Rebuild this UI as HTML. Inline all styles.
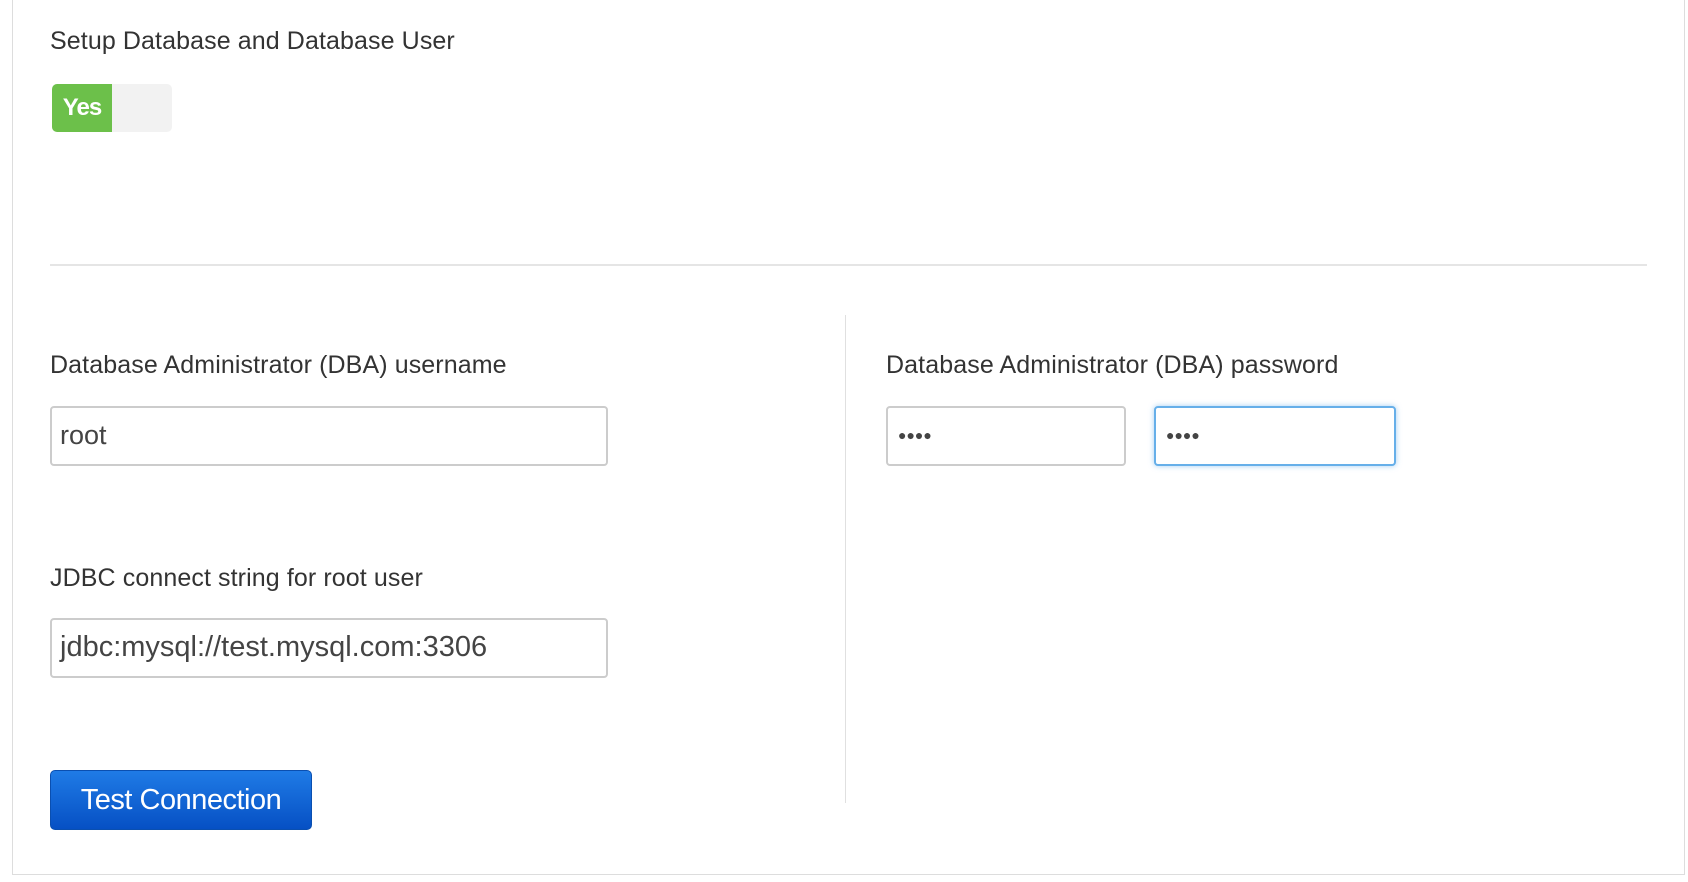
<!DOCTYPE html>
<html><head><style>
body{margin:0;width:1688px;height:882px;background:#fff;font-family:"Liberation Sans",Arial,sans-serif;color:#333;position:relative;overflow:hidden}
.box{position:absolute;left:12px;top:-2px;width:1671px;height:876px;border:1px solid #ddd;border-top:none}
.t{position:absolute;font-size:25px;white-space:nowrap;letter-spacing:0.1px}
.in{position:absolute;box-sizing:border-box;border:2px solid #ccc;border-radius:4px;background:#fff;font-size:27px;color:#444;padding-left:8px;line-height:54px}
</style></head><body>
<div class="box"></div>
<div class="t" style="left:50px;top:27px">Setup Database and Database User</div>
<div style="position:absolute;left:52px;top:84px;width:120px;height:48px;background:#f2f2f2;border-radius:5px;overflow:hidden">
<div style="width:60px;height:48px;background:#6cc04a;color:#fff;font-weight:bold;font-size:24px;line-height:48px;text-align:center;letter-spacing:-1px">Yes</div></div>
<div style="position:absolute;left:50px;top:264px;width:1597px;height:2px;background:#e5e5e5"></div>
<div style="position:absolute;left:845px;top:315px;width:1px;height:488px;background:#e0e0e0"></div>
<div class="t" style="left:50px;top:351px">Database Administrator (DBA) username</div>
<div class="in" style="left:50px;top:406px;width:558px;height:60px">root</div>
<div class="t" style="left:886px;top:351px">Database Administrator (DBA) password</div>
<div class="in" style="left:886px;top:406px;width:240px;height:60px;font-size:14px;padding-left:10px">●●●●</div>
<div class="in" style="left:1154px;top:406px;width:242px;height:60px;font-size:14px;padding-left:10px;border-color:#66afe9;box-shadow:0 0 6px rgba(102,175,233,.6)">●●●●</div>
<div class="t" style="left:50px;top:564px">JDBC connect string for root user</div>
<div class="in" style="left:50px;top:618px;width:558px;height:60px;font-size:29px">jdbc:mysql://test.mysql.com:3306</div>
<div style="position:absolute;left:50px;top:770px;width:262px;height:60px;box-sizing:border-box;border:1px solid #0a4fb0;border-radius:5px;background:linear-gradient(#1f7be6,#0650c4);color:#fff;font-size:29px;line-height:58px;text-align:center;letter-spacing:-0.5px">Test Connection</div>
</body></html>
